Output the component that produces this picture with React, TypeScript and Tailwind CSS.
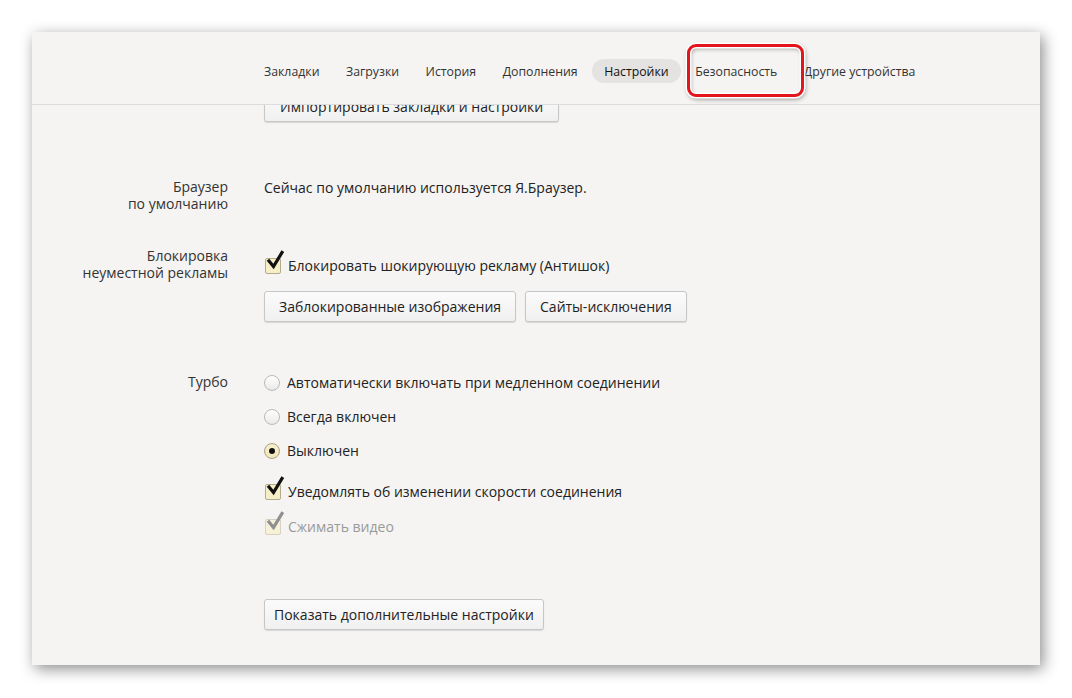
const tabs = ["Закладки", "Загрузки", "История", "Дополнения", "Настройки", "Безопасность", "Другие устройства"];

const Checkbox = ({ disabled = false }: { disabled?: boolean }) => (
  <span className="relative inline-block w-[16px] h-[16px] shrink-0">
    <span
      className={`absolute inset-0 rounded-[2px] border ${
        disabled ? "border-[#d6d1c0] bg-[#f7f1d8]" : "border-[#b3ab8e] bg-[#f6eec6]"
      }`}
    />
    <svg
      className="absolute left-[1px] top-[-8px]"
      width="19"
      height="21"
      viewBox="0 0 19 21"
      aria-hidden="true"
    >
      <path
        d="M3 11 L7.5 16.5 L16 2.5"
        fill="none"
        stroke={disabled ? "#8f8f8f" : "#111"}
        strokeWidth="3.2"
        strokeLinecap="square"
        strokeLinejoin="miter"
      />
    </svg>
  </span>
);

const Radio = ({ checked = false }: { checked?: boolean }) => (
  <span
    className={`inline-flex items-center justify-center w-[16px] h-[16px] rounded-full border shrink-0 ${
      checked
        ? "border-[#aaa38a] bg-[radial-gradient(circle_at_50%_40%,#fbf6dc,#ecdfa6)]"
        : "border-[#b9b9b9] bg-[linear-gradient(#ffffff,#e9e9e9)]"
    }`}
  >
    {checked && <span className="w-[6px] h-[6px] rounded-full bg-[#111]" />}
  </span>
);

const Button = ({ children, className = "" }: { children: React.ReactNode; className?: string }) => (
  <button
    className={`h-[31px] rounded-[3px] border border-[#c6c6c6] bg-[linear-gradient(#fbfbfb,#f0f0f0)] shadow-[0_1px_1px_rgba(0,0,0,0.12)] text-[#222] whitespace-nowrap ${className}`}
  >
    {children}
  </button>
);

export default function App() {
  return (
    <div
      className="w-[1072px] h-[698px] bg-white pt-[32px] pl-[32px] overflow-hidden text-[14px] leading-[17px] text-[#222]"
      style={{ fontFamily: '"Open Sans", "Noto Sans", sans-serif' }}
    >
      <div className="relative w-[1008px] h-[633px] bg-[#f5f4f2] shadow-[3px_4px_14px_rgba(0,0,0,0.45)] flex flex-col">
        <header className="h-[73px] shrink-0 border-b border-[#dcdcdc] flex items-center pl-[220px] pt-[6px]">
          <nav className="flex items-center gap-[2.5px]">
            {tabs.map((t) => (
              <span
                key={t}
                className={`h-[24px] px-[12px] flex items-center rounded-full text-[12.3px] ${
                  t === "Настройки" ? "bg-[#e4e3e1] text-[#111]" : "text-[#333]"
                }`}
              >
                {t}
              </span>
            ))}
          </nav>
        </header>

        <div className="absolute left-[655px] top-[12px] w-[117px] h-[53px] rounded-[9px] border-[3px] border-[#e3141b] shadow-[0_0_0_1.5px_#fff,1px_2px_5px_rgba(0,0,0,0.45),inset_0_0_0_1.5px_#fff,inset_1px_2px_4px_rgba(0,0,0,0.35)]" />

        <main className="flex-1 overflow-hidden">
          <div className="pl-[232px] -mt-[14px]">
            <Button className="px-[15px]">Импортировать закладки и настройки</Button>
          </div>

          <div className="flex mt-[56px]">
            <div className="w-[196px] text-right text-[#333]">
              Браузер
              <br />
              по умолчанию
            </div>
            <div className="pl-[36px] pt-[1px]">Сейчас по умолчанию используется Я.Браузер.</div>
          </div>

          <div className="flex mt-[35px]">
            <div className="w-[196px] text-right text-[#333]">
              Блокировка
              <br />
              неуместной рекламы
            </div>
            <div className="pl-[36px] pt-[10px] flex flex-col">
              <label className="flex items-center gap-[7px] h-[17px] pl-[1px]">
                <Checkbox />
                <span>Блокировать шокирующую рекламу (Антишок)</span>
              </label>
              <div className="flex gap-[9px] mt-[17px]">
                <Button className="px-[14px]">Заблокированные изображения</Button>
                <Button className="px-[14px]">Сайты-исключения</Button>
              </div>
            </div>
          </div>

          <div className="flex mt-[51px]">
            <div className="w-[196px] text-right text-[#333]">Турбо</div>
            <div className="pl-[36px] pt-[1px] flex flex-col">
              <label className="flex items-center gap-[7px] h-[17px]">
                <Radio />
                <span>Автоматически включать при медленном соединении</span>
              </label>
              <label className="flex items-center gap-[7px] h-[17px] mt-[17px]">
                <Radio />
                <span>Всегда включен</span>
              </label>
              <label className="flex items-center gap-[7px] h-[17px] mt-[17px]">
                <Radio checked />
                <span>Выключен</span>
              </label>
              <label className="flex items-center gap-[7px] h-[17px] mt-[24px] pl-[1px]">
                <Checkbox />
                <span>Уведомлять об изменении скорости соединения</span>
              </label>
              <label className="flex items-center gap-[7px] h-[17px] mt-[18px] pl-[1px] text-[#9a9a9a]">
                <Checkbox disabled />
                <span>Сжимать видео</span>
              </label>
            </div>
          </div>

          <div className="pl-[232px] mt-[64px]">
            <Button className="px-[9px]">Показать дополнительные настройки</Button>
          </div>
        </main>
      </div>
    </div>
  );
}
